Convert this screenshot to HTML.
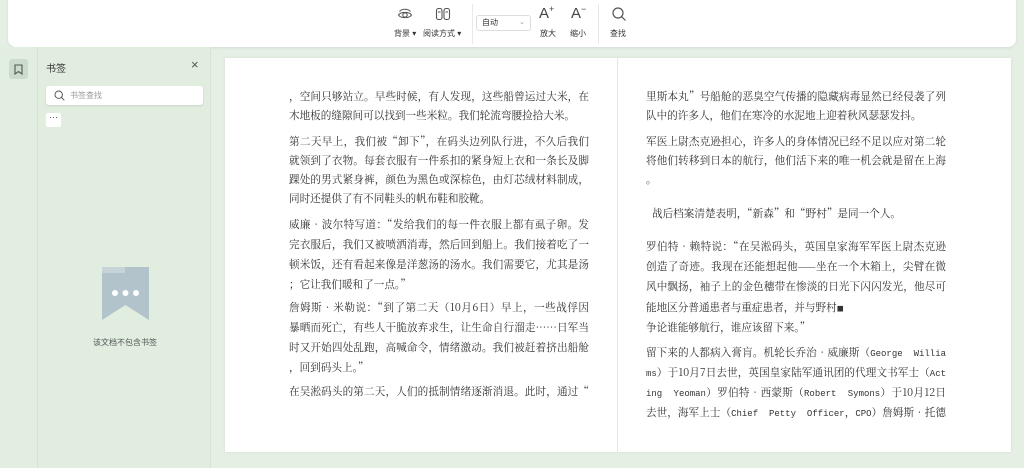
<!DOCTYPE html>
<html><head><meta charset="utf-8"><style>
*{margin:0;padding:0;box-sizing:border-box}
body{width:1024px;height:468px;overflow:hidden;background:#e5efe4;font-family:"Liberation Sans","Noto Sans CJK SC",sans-serif;position:relative;color:#333}
.tb{position:absolute;left:8px;top:0;width:1008px;height:47px;background:#fff;border-radius:0 0 8px 8px;box-shadow:0 1px 3px rgba(0,0,0,.08)}
.ti{position:absolute;font-size:8px;color:#333;text-align:center;white-space:nowrap}
.sep{position:absolute;top:4px;width:1px;height:40px;background:#e8e8e8}
.rail{position:absolute;left:0;top:47px;width:37px;height:421px;background:#e2eee1}
.bm{position:absolute;left:9px;top:59px;width:19px;height:20px;background:#cbdccd;border-radius:3px}
.side{position:absolute;left:37px;top:47px;width:174px;height:421px;background:#e0eddf;border-left:1px solid #d6e2d5;border-right:1px solid #d6e2d5}
.page{position:absolute;left:225px;top:58px;width:786px;height:394px;background:#fff;box-shadow:0 0 3px rgba(0,0,0,.08)}
.l{position:absolute;width:300px;height:20px;line-height:20px;font-family:"Noto Serif CJK SC","Liberation Serif",serif;font-size:10.6px;color:#333;white-space:nowrap;text-align:justify;text-align-last:justify}
.e{text-align-last:left}
.m{font-family:"Liberation Mono",monospace;font-size:9px}
</style></head><body>
<div class="tb">
 <svg style="position:absolute;left:389px;top:7px" width="16" height="14" viewBox="0 0 16 14" fill="none" stroke="#555" stroke-width="1.1"><path d="M1.5 8C3.5 4.5 12.5 4.5 14.5 8C12.5 11.5 3.5 11.5 1.5 8Z"/><circle cx="8" cy="8" r="2.2"/><path d="M2.5 4.5C5 1.5 11 1.5 13.5 4.5"/></svg>
 <div class="ti" style="left:386px;top:28px">背景 ▾</div>
 <svg style="position:absolute;left:427px;top:7px" width="16" height="14" viewBox="0 0 16 14" fill="none" stroke="#555" stroke-width="1.1"><rect x="1.5" y="1.5" width="5.5" height="11" rx="2"/><rect x="9" y="1.5" width="5.5" height="11" rx="2"/><path d="M3 5h2.5M10.5 5h2.5"/></svg>
 <div class="ti" style="left:415px;top:28px">阅读方式 ▾</div>
 <div class="sep" style="left:464px"></div>
 <div style="position:absolute;left:468px;top:15px;width:55px;height:16px;border:1px solid #ddd;border-radius:3px;font-size:8px;line-height:14px;padding-left:5px">自动<span style="position:absolute;right:5px;color:#999;font-size:7px">⌄</span></div>
 <div class="ti" style="left:531px;top:4px;font-size:15px;color:#444">A<sup style="font-size:9px;vertical-align:6px">+</sup></div>
 <div class="ti" style="left:532px;top:28px">放大</div>
 <div class="ti" style="left:563px;top:4px;font-size:15px;color:#444">A<sup style="font-size:9px;vertical-align:6px">−</sup></div>
 <div class="ti" style="left:562px;top:28px">缩小</div>
 <div class="sep" style="left:590px"></div>
 <svg style="position:absolute;left:603px;top:6px" width="16" height="16" viewBox="0 0 16 16" fill="none" stroke="#555" stroke-width="1.2"><circle cx="7" cy="7" r="5"/><path d="M10.8 10.8L14.5 14.5"/></svg>
 <div class="ti" style="left:602px;top:28px">查找</div>
</div>
<div class="rail"></div>
<div class="bm"><svg style="position:absolute;left:5px;top:5px" width="9" height="11" viewBox="0 0 9 11" fill="none" stroke="#555" stroke-width="1.1"><path d="M1 1h7v9L4.5 7.5 1 10Z"/></svg></div>
<div class="side">
 <div style="position:absolute;left:8px;top:13px;font-size:10px;color:#333">书签</div>
 <div style="position:absolute;left:153px;top:10px;font-size:13px;color:#555">×</div>
 <div style="position:absolute;left:8px;top:39px;width:157px;height:19px;background:#fff;border-radius:3px;box-shadow:0 1px 2px rgba(0,0,0,.1)">
  <svg style="position:absolute;left:8px;top:4px" width="11" height="11" viewBox="0 0 11 11" fill="none" stroke="#555" stroke-width="1"><circle cx="4.7" cy="4.7" r="3.7"/><path d="M7.5 7.5L10.3 10.3"/></svg>
  <span style="position:absolute;left:24px;top:4px;font-size:8px;color:#999">书签查找</span></div>
 <div style="position:absolute;left:8px;top:66px;width:15px;height:14px;background:#fff;border-radius:2px;font-size:9px;line-height:9px;text-align:center;color:#444">···</div>
 <svg style="position:absolute;left:64px;top:220px" width="47" height="53" viewBox="0 0 47 53"><path d="M0 0h47v53L23.5 38 0 53Z" fill="#b3c3cb"/><rect x="0" y="0" width="23" height="6" fill="#c6d3d8"/><circle cx="13" cy="26" r="3" fill="#fff"/><circle cx="23.5" cy="26" r="3" fill="#fff"/><circle cx="34" cy="26" r="3" fill="#fff"/></svg>
 <div style="position:absolute;left:55px;top:290px;font-size:8px;color:#555">该文档不包含书签</div>
</div>
<div class="page"><div style="position:absolute;left:392px;top:0;width:1px;height:394px;background:#e6e6e6"></div></div>
<div class="l" style="left:289px;top:87px">，空间只够站立。早些时候，有人发现，这些船曾运过大米，在</div>
<div class="l e" style="left:289px;top:106px">木地板的缝隙间可以找到一些米粒。我们轮流弯腰捡拾大米。</div>
<div class="l" style="left:289px;top:132px">第二天早上，我们被“卸下”，在码头边列队行进，不久后我们</div>
<div class="l" style="left:289px;top:151px">就领到了衣物。每套衣服有一件系扣的紧身短上衣和一条长及脚</div>
<div class="l" style="left:289px;top:170px">踝处的男式紧身裤，颜色为黑色或深棕色，由灯芯绒材料制成，</div>
<div class="l e" style="left:289px;top:189px">同时还提供了有不同鞋头的帆布鞋和胶靴。</div>
<div class="l" style="left:289px;top:215px">威廉•波尔特写道：“发给我们的每一件衣服上都有虱子卵。发</div>
<div class="l" style="left:289px;top:235px">完衣服后，我们又被喷洒消毒，然后回到船上。我们接着吃了一</div>
<div class="l" style="left:289px;top:255px">顿米饭，还有看起来像是洋葱汤的汤水。我们需要它，尤其是汤</div>
<div class="l e" style="left:289px;top:275px">；它让我们暖和了一点。”</div>
<div class="l" style="left:289px;top:298px">詹姆斯•米勒说：“到了第二天（10月6日）早上，一些战俘因</div>
<div class="l" style="left:289px;top:318px">暴晒而死亡，有些人干脆放弃求生，让生命自行溜走……日军当</div>
<div class="l" style="left:289px;top:338px">时又开始四处乱跑，高喊命令，情绪激动。我们被赶着挤出船舱</div>
<div class="l e" style="left:289px;top:358px">，回到码头上。”</div>
<div class="l" style="left:289px;top:382px">在吴淞码头的第二天，人们的抵制情绪逐渐消退。此时，通过“</div>
<div class="l" style="left:646px;top:87px">里斯本丸”号船舱的恶臭空气传播的隐藏病毒显然已经侵袭了列</div>
<div class="l e" style="left:646px;top:106px">队中的许多人，他们在寒冷的水泥地上迎着秋风瑟瑟发抖。</div>
<div class="l" style="left:646px;top:132px">军医上尉杰克逊担心，许多人的身体情况已经不足以应对第二轮</div>
<div class="l" style="left:646px;top:151px">将他们转移到日本的航行，他们活下来的唯一机会就是留在上海</div>
<div class="l e" style="left:646px;top:170px">。</div>
<div class="l e" style="left:652px;top:204px">战后档案清楚表明，“新森”和“野村”是同一个人。</div>
<div class="l" style="left:646px;top:237px">罗伯特•赖特说：“在吴淞码头，英国皇家海军军医上尉杰克逊</div>
<div class="l" style="left:646px;top:257px">创造了奇迹。我现在还能想起他——坐在一个木箱上，尖臂在微</div>
<div class="l" style="left:646px;top:277px">风中飘扬，袖子上的金色穗带在惨淡的日光下闪闪发光，他尽可</div>
<div class="l e" style="left:646px;top:298px">能地区分普通患者与重症患者，并与野村<span style="font-size:7px">■</span></div>
<div class="l e" style="left:646px;top:318px">争论谁能够航行，谁应该留下来。”</div>
<div class="l" style="left:646px;top:343px">留下来的人都病入膏肓。机轮长乔治•威廉斯（<span class="m">George&nbsp;&nbsp;Willia</span></div>
<div class="l" style="left:646px;top:363px"><span class="m">ms</span>）于10月7日去世，英国皇家陆军通讯团的代理文书军士（<span class="m">Act</span></div>
<div class="l" style="left:646px;top:383px"><span class="m">ing&nbsp;&nbsp;Yeoman</span>）罗伯特•西蒙斯（<span class="m">Robert&nbsp;&nbsp;Symons</span>）于10月12日</div>
<div class="l" style="left:646px;top:403px">去世，海军上士（<span class="m">Chief&nbsp;&nbsp;Petty&nbsp;&nbsp;Officer</span>，<span class="m">CPO</span>）詹姆斯•托德</div>
</body></html>
